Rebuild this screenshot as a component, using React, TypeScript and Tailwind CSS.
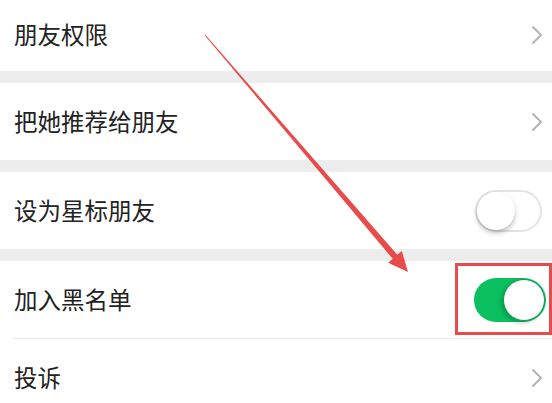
import { ReactNode } from 'react';

const Chevron = () => (
  <svg width="12" height="20" viewBox="0 0 12 20" className="mr-[9px]">
    <path d="M2 2 L10 10 L2 18" fill="none" stroke="#b4b4b4" strokeWidth="2" strokeLinecap="round" strokeLinejoin="round" />
  </svg>
);

function Row({ label, right, className = 'h-[77px]' }: { label: string; right?: ReactNode; className?: string }) {
  return (
    <div className={`flex items-center justify-between bg-white pl-[14px] ${className}`}>
      <span className="text-[23.5px] text-[#222] leading-none">{label}</span>
      {right}
    </div>
  );
}

const Gap = () => <div className="h-[12px] bg-[#ededed]" />;

export default function App() {
  return (
    <div
      className="relative w-[552px] h-[403px] overflow-hidden bg-white"
      style={{ fontFamily: '"Noto Sans CJK SC", "Noto Sans", sans-serif' }}
    >
      <Row label="朋友权限" right={<Chevron />} className="h-[71px] pb-[2px]" />
      <Gap />
      <Row label="把她推荐给朋友" right={<Chevron />} />
      <Gap />
      <Row
        label="设为星标朋友"
        right={
          <div className="mr-[10px] w-[67px] h-[42px] rounded-full border-2 border-[#e3e3e3] bg-white relative">
            <div className="absolute left-0 top-0 w-[38px] h-[38px] rounded-full bg-white shadow-[0_3px_5px_rgba(0,0,0,0.25)]" />
          </div>
        }
      />
      <Gap />
      <Row
        label="加入黑名单"
        right={
          <div className="mr-[6px] w-[72px] h-[44px] rounded-full bg-[#0ac05f] relative">
            <div className="absolute right-[1px] top-[1px] w-[42px] h-[42px] rounded-full bg-white border border-[#0a9e4f] shadow-[-2px_2px_4px_rgba(0,0,0,0.2)]" />
          </div>
        }
      />
      <div className="ml-[13px] h-px bg-[#ececec]" />
      <Row label="投诉" right={<Chevron />} />

      {/* annotation */}
      <div className="absolute left-[455px] top-[263px] w-[97px] h-[72px] border-[3px] border-[#e94b4b]" />
      <svg className="absolute left-0 top-0" width="552" height="403">
        <polygon
          points="204.6,35.3 392.7,258.8 388.2,262.7 408,272 401.8,250.9 397.3,254.8 205.4,34.7"
          fill="#e94b4b"
        />
      </svg>
    </div>
  );
}
